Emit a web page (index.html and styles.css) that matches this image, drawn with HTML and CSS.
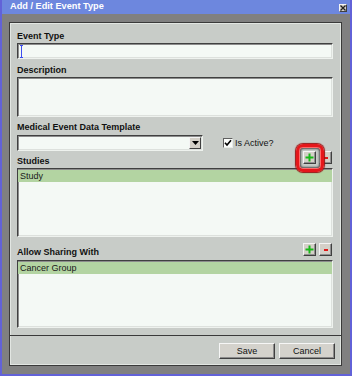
FILE: index.html
```html
<!DOCTYPE html>
<html>
<head>
<meta charset="utf-8">
<link rel="stylesheet" href="styles.css">
</head>
<body>
<div class="window">
  <div class="titlebar">
    <span class="title">Add / Edit Event Type</span>
    <span class="close"><svg width="6" height="6" viewBox="0 0 6 6"><path d="M0.5 0.5L5.5 5.5M5.5 0.5L0.5 5.5" stroke="#202020" stroke-width="1.3"/></svg></span>
  </div>
  <div class="body">
    <div class="frame">
      <div class="form">
        <div class="lbl l-type">Event Type</div>
        <div class="field input"><span class="caret"><svg width="3" height="13" viewBox="0 0 3 13"><path d="M0 0.5H3M1.5 0.5V12.5M0 12.5H3" stroke="#2a3cf0" stroke-width="1" opacity="0.9"/></svg></span></div>
        <div class="lbl l-desc">Description</div>
        <div class="field textarea"></div>
        <div class="lbl l-med">Medical Event Data Template</div>
        <div class="select-row">
          <div class="field select"><span class="drop"><svg width="7" height="4" viewBox="0 0 7 4"><path d="M0 0H7L3.5 4Z" fill="#000"/></svg></span></div>
          <span class="check"><svg width="8" height="8" viewBox="0 0 8 8"><path d="M1 3.8L3 6L7 1.2" stroke="#000" stroke-width="1.6" fill="none"/></svg></span>
          <span class="check-lbl">Is Active?</span>
        </div>
        <div class="list-head studies-head">
          <div class="lbl">Studies</div>
          <div class="pm">
            <span class="sbtn plus"><svg width="9" height="9" viewBox="0 0 9 9"><path d="M4.5 0.5V8.5M0.5 4.5H8.5" stroke="#18b818" stroke-width="2"/></svg><span class="ring"></span></span>
            <span class="sbtn minus"><svg width="4" height="2" viewBox="0 0 4 2"><path d="M0 1H4" stroke="#e01818" stroke-width="2"/></svg></span>
          </div>
        </div>
        <div class="field list studies-list"><div class="row">Study</div></div>
        <div class="list-head share-head">
          <div class="lbl">Allow Sharing With</div>
          <div class="pm">
            <span class="sbtn plus"><svg width="9" height="9" viewBox="0 0 9 9"><path d="M4.5 0.5V8.5M0.5 4.5H8.5" stroke="#18b818" stroke-width="2"/></svg></span>
            <span class="sbtn minus"><svg width="4" height="2" viewBox="0 0 4 2"><path d="M0 1H4" stroke="#e01818" stroke-width="2"/></svg></span>
          </div>
        </div>
        <div class="field list share-list"><div class="row">Cancer Group</div></div>
      </div>
      <div class="bar">
        <span class="btn">Save</span>
        <span class="btn">Cancel</span>
      </div>
    </div>
  </div>
</div>
</body>
</html>
```
FILE: styles.css
```css
* { box-sizing: border-box; }
html, body { margin: 0; padding: 0; background: #808080; }
body { font-family: "Liberation Sans", Arial, sans-serif; font-size: 9px; color: #111; }

.window {
  width: 352px;
  height: 376px;
  border-left: 2px solid #6262d8;
  border-right: 2px solid #6262d8;
  border-bottom: 2px solid #6262d8;
  background: #808080;
}
.titlebar {
  height: 14px;
  background: #6d87de;
  display: flex;
  justify-content: space-between;
  align-items: flex-start;
  padding-left: 8px;
}
.title {
  color: #fff;
  font-weight: bold;
  font-size: 9.2px;
  line-height: 13px;
}
.close {
  width: 8px;
  height: 8px;
  margin-top: 4px;
  margin-right: 3px;
  background: #d4d0c8;
  border: 1px solid;
  border-color: #f4f4f4 #404040 #404040 #f4f4f4;
  display: flex;
  align-items: center;
  justify-content: center;
}
.close svg { display: block; }

.body {
  height: 360px;
  padding: 8px 8px 8px 7px;
}
.frame {
  height: 344px;
  border: 1px solid #3a3a3a;
  background: #c8ccc8;
  box-shadow: inset 1px 1px 0 #e2e6e2, inset -1px -1px 0 #e2e6e2;
  display: flex;
  flex-direction: column;
}
.form {
  height: 312px;
  padding: 0 8px 0 7px;
  display: flex;
  flex-direction: column;
}
.lbl {
  font-weight: bold;
  line-height: 11px;
  height: 11px;
  white-space: nowrap;
}
.l-type { margin-top: 8px; }
.l-desc { margin-top: 6px; }
.l-med { margin-top: 5px; }

.field {
  background: #f4f9f5;
  border: 1px solid;
  border-color: #404040 #eef2ee #eef2ee #404040;
  box-shadow: inset 1px 1px 0 #8c8c8c, inset -1px -1px 0 #dde1dd;
  position: relative;
}
.input { margin-top: 1px; height: 16px; }
.caret { position: absolute; left: 2px; top: 1px; }
.caret svg { display: block; }
.textarea { margin-top: 1px; height: 40px; }

.select-row {
  margin-top: 2px;
  height: 16px;
  display: flex;
  align-items: center;
}
.select {
  width: 186px;
  height: 16px;
  display: flex;
  justify-content: flex-end;
  align-items: center;
  padding-right: 1px;
}
.drop {
  width: 12px;
  height: 12px;
  background: #d4d0c8;
  border: 1px solid;
  border-color: #f4f4f4 #404040 #404040 #f4f4f4;
  display: flex;
  align-items: center;
  justify-content: center;
}
.drop svg { display: block; }
.check {
  margin-left: 20px;
  width: 10px;
  height: 10px;
  background: #fbfdfb;
  border: 1px solid;
  border-color: #606060 #e8ece8 #e8ece8 #606060;
  display: flex;
  align-items: center;
  justify-content: center;
}
.check svg { display: block; }
.check-lbl { margin-left: 2px; line-height: 11px; }

.list-head {
  display: flex;
  justify-content: space-between;
  align-items: flex-start;
  position: relative;
  z-index: 2;
}
.studies-head { height: 17px; }
.studies-head .lbl { margin-top: 5px; }
.studies-head .pm { margin-top: 0; }
.share-head { height: 23px; }
.share-head .lbl { margin-top: 10px; }
.share-head .pm { margin-top: 6px; }

.pm { display: flex; gap: 3px; margin-right: 1px; }
.sbtn {
  position: relative;
  width: 13px;
  height: 13px;
  background: #d4d0c8;
  border: 1px solid;
  border-color: #f4f4f4 #404040 #404040 #f4f4f4;
  box-shadow: inset -1px -1px 0 #909090;
  display: flex;
  align-items: center;
  justify-content: center;
}
.sbtn svg { display: block; }
.ring {
  position: absolute;
  z-index: 3;
  left: -8px;
  top: -8px;
  width: 28px;
  height: 28px;
  border: 3px solid #e5171b;
  border-radius: 7px;
  box-shadow: 0 0 1px 1px #9a1414, inset 0 0 0 1px #ff6a6a, inset 0 0 2px 2px #505050;
}

.studies-list { height: 69px; }
.share-list { height: 68px; }
.row {
  margin: 1px 0 0 0;
  height: 12px;
  line-height: 12px;
  padding-left: 2px;
  background: #b3d4a2;
  color: #1a1a1a;
  white-space: nowrap;
}

.bar {
  border-top: 1px solid #3a3a3a;
  flex: 1;
  display: flex;
  justify-content: flex-end;
  align-items: flex-start;
  gap: 4px;
  padding: 7px 6px 0 0;
}
.btn {
  width: 56px;
  height: 16px;
  background: #d4d2cc;
  border: 1px solid;
  border-color: #f6f6f6 #404040 #404040 #f6f6f6;
  box-shadow: inset -1px -1px 0 #8c8c8c;
  display: flex;
  align-items: center;
  justify-content: center;
  color: #111;
  line-height: 11px;
}
```
